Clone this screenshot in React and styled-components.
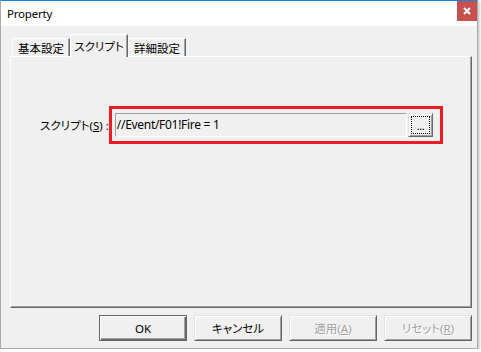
import React from 'react';
import styled, { createGlobalStyle } from 'styled-components';

const GlobalStyle = createGlobalStyle`
  html, body {
    margin: 0;
    padding: 0;
    background: #ffffff;
  }
  body {
    font-family: "Noto Sans", "Noto Sans CJK JP", sans-serif;
    font-size: 12px;
    color: #000;
    font-feature-settings: "palt";
  }
`;

const Window = styled.div`
  width: 478px;
  height: 349px;
  box-sizing: border-box;
  border: 1px solid #aaaaaa;
  border-top-color: #1883d7;
  background: #f0f0f0;
  display: flex;
  flex-direction: column;
  box-shadow: 1px 1px 3px rgba(0, 0, 0, 0.3);
`;

const TitleBar = styled.div`
  height: 25px;
  flex: none;
  background: #ffffff;
  display: flex;
  justify-content: space-between;
  align-items: flex-start;
`;

const Title = styled.span`
  align-self: center;
  padding-left: 6px;
  font-size: 11.5px;
  letter-spacing: -0.2px;
`;

const CloseButton = styled.div`
  width: 20px;
  height: 20px;
  background: #c75050;
  display: flex;
  align-items: center;
  justify-content: center;
`;

const Body = styled.div`
  flex: 1;
  display: flex;
  flex-direction: column;
  padding: 8px 5px 7px 9px;
`;

const TabStrip = styled.div`
  height: 22px;
  flex: none;
  display: flex;
  align-items: flex-end;
  padding-left: 2px;
  position: relative;
  z-index: 1;
`;

const Tab = styled.div`
  width: 58px;
  height: ${p => (p.$active ? '23px' : '18px')};
  margin-bottom: ${p => (p.$active ? '-1px' : '0')};
  box-sizing: border-box;
  background: #f0f0f0;
  border-top: 1px solid #ffffff;
  border-left: 1px solid #ffffff;
  border-right: 1px solid #696969;
  box-shadow: inset -1px 0 #a0a0a0;
  display: flex;
  align-items: center;
  justify-content: center;
  padding-top: ${p => (p.$active ? '0' : '1px')};
  font-size: 11.5px;
`;

const Panel = styled.div`
  flex: 1;
  box-sizing: border-box;
  border: 1px solid #ffffff;
  border-right-color: #696969;
  border-bottom-color: #696969;
  box-shadow: inset -1px -1px #a0a0a0;
  padding: 49px 0 0 29px;
`;

const FieldRow = styled.div`
  width: 403px;
  display: flex;
  align-items: center;
  justify-content: space-between;
`;

const Label = styled.span`
  font-size: 11.5px;
  white-space: pre;
`;

const Highlight = styled.div`
  width: 336px;
  box-sizing: border-box;
  border: 3px solid #ed1c24;
  padding: 4px 7px 4px 3px;
  display: flex;
`;

const ScriptField = styled.div`
  flex: 1;
  height: 24px;
  box-sizing: border-box;
  border-top: 1px solid #a0a0a0;
  border-left: 1px solid #a0a0a0;
  border-bottom: 1px solid #ffffff;
  border-right: 1px solid #ffffff;
  padding-left: 1px;
  line-height: 22px;
  font-size: 12px;
  letter-spacing: -0.3px;
`;

const BrowseButton = styled.div`
  width: 25px;
  height: 24px;
  margin-left: 1px;
  box-sizing: border-box;
  border: 1px solid #e3e3e3;
  border-right-color: #696969;
  border-bottom-color: #696969;
  box-shadow: inset 1px 1px #ffffff, inset -1px -1px #a0a0a0;
  padding: 2px;
  display: flex;
`;

const FocusRect = styled.div`
  flex: 1;
  border: 1px dotted #000;
  display: flex;
  align-items: flex-end;
  justify-content: center;
  font-size: 11px;
  line-height: 12px;
  padding-bottom: 1px;
  letter-spacing: -0.5px;
`;

const ButtonRow = styled.div`
  flex: none;
  display: flex;
  justify-content: flex-end;
  gap: 7px;
  margin-top: 7px;
`;

const Button = styled.div`
  width: 88px;
  height: 26px;
  box-sizing: border-box;
  display: flex;
  align-items: center;
  justify-content: center;
  font-size: 11.5px;
  color: ${p => (p.$disabled ? '#a0a0a0' : '#000')};
  text-shadow: ${p => (p.$disabled ? '1px 1px #ffffff' : 'none')};
  border: 1px solid ${p => (p.$default ? '#646464' : '#e3e3e3')};
  border-right-color: #646464;
  border-bottom-color: #646464;
  box-shadow: ${p =>
    p.$default
      ? 'inset 1px 1px #ffffff, inset -1px -1px #696969, inset -2px -2px #a0a0a0'
      : 'inset 1px 1px #ffffff, inset -1px -1px #a0a0a0'};
`;

const CloseIcon = () => (
  <svg width="8" height="8" viewBox="0 0 8 8">
    <path d="M1 1 L7 7 M7 1 L1 7" stroke="#fff" strokeWidth="2" />
  </svg>
);

export default function App() {
  return (
    <>
      <GlobalStyle />
      <Window>
        <TitleBar>
          <Title>Property</Title>
          <CloseButton>
            <CloseIcon />
          </CloseButton>
        </TitleBar>
        <Body>
          <TabStrip>
            <Tab>基本設定</Tab>
            <Tab $active>スクリプト</Tab>
            <Tab>詳細設定</Tab>
          </TabStrip>
          <Panel>
            <FieldRow>
              <Label>
                スクリプト(<u>S</u>) :
              </Label>
              <Highlight>
                <ScriptField>//Event/F01!Fire = 1</ScriptField>
                <BrowseButton>
                  <FocusRect>...</FocusRect>
                </BrowseButton>
              </Highlight>
            </FieldRow>
          </Panel>
          <ButtonRow>
            <Button $default>OK</Button>
            <Button>キャンセル</Button>
            <Button $disabled>
              適用(<u>A</u>)
            </Button>
            <Button $disabled>
              リセット(<u>R</u>)
            </Button>
          </ButtonRow>
        </Body>
      </Window>
    </>
  );
}
